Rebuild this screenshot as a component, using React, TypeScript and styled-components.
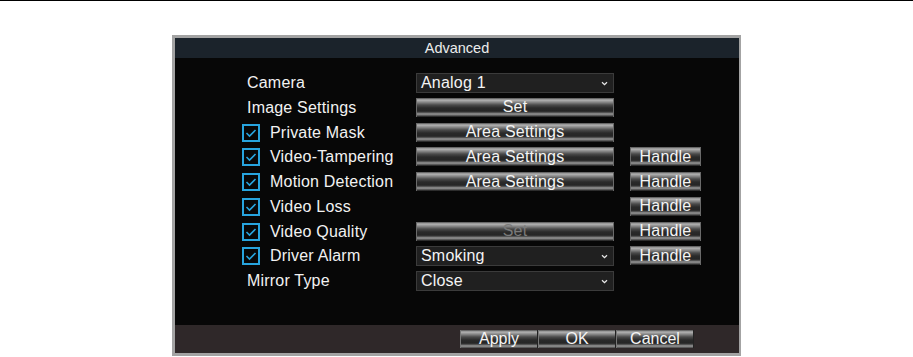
import React from "react";
import styled, { createGlobalStyle, css } from "styled-components";

const GlobalStyle = createGlobalStyle`
  html, body {
    margin: 0;
    padding: 0;
    background: #ffffff;
    font-family: "Liberation Sans", Arial, sans-serif;
  }
`;

const TopRule = styled.div`
  height: 1px;
  background: #000;
`;

const Stage = styled.div`
  padding: 34px 0 0 172px;
`;

const Window = styled.div`
  box-sizing: border-box;
  width: 569px;
  height: 321px;
  display: flex;
  flex-direction: column;
  border: 3px solid #a3a3a3;
  border-right-width: 2px;
`;

const TitleBar = styled.div`
  height: 20px;
  flex-shrink: 0;
  background: #1b232b;
  color: #ececec;
  font-size: 14.5px;
  line-height: 21px;
  text-align: center;
`;

const Body = styled.div`
  flex: 1;
  background: #070707;
  padding: 15px 0 0 67px;
`;

const Form = styled.div`
  display: grid;
  grid-template-columns: 158px 198px 71px;
  grid-auto-rows: 20px;
  column-gap: 16px;
  row-gap: 4.75px;
`;

const Label = styled.div<{ $indent?: boolean }>`
  display: flex;
  align-items: center;
  gap: 10px;
  color: #f2f2f2;
  font-size: 16px;
  letter-spacing: 0.2px;
  padding-left: ${(p) => (p.$indent ? "5px" : "0")};
  white-space: nowrap;
`;

const Box = styled.span`
  box-sizing: border-box;
  width: 18px;
  height: 18px;
  border: 2px solid #27a4de;
  display: flex;
  align-items: center;
  justify-content: center;
`;

const metal = css`
  background: linear-gradient(
    to bottom,
    #4e4e4e 0px,
    #b4b4b4 2px,
    #8c8c8c 4px,
    #4a4a4a 7px,
    #2a2a2a 10px,
    #262626 13px,
    #3a3a3a 14px,
    #9a9a9a 16px,
    #5a5a5a 17.5px,
    #161616 19px
  );
`;

const Button = styled.div<{ $disabled?: boolean }>`
  ${metal}
  height: 19px;
  display: flex;
  align-items: center;
  justify-content: center;
  color: ${(p) => (p.$disabled ? "#7a7a7a" : "#f4f4f4")};
  font-size: 16px;
  letter-spacing: 0.2px;
  box-shadow: inset 1px 0 0 #6a6a6a, inset -1px 0 0 #6a6a6a;
`;

const Select = styled.div`
  box-sizing: border-box;
  height: 20px;
  background: #202020;
  border: 1px solid #3b3b3b;
  display: flex;
  align-items: center;
  justify-content: space-between;
  padding: 0 5px 0 4px;
  color: #f4f4f4;
  font-size: 16px;
  letter-spacing: 0.2px;
`;

const Empty = styled.div``;

const Footer = styled.div`
  height: 28px;
  flex-shrink: 0;
  background: #2f2829;
  display: flex;
  align-items: center;
  justify-content: flex-end;
  padding-right: 45px;
`;

const FooterButton = styled.div`
  ${metal}
  width: 78px;
  height: 18px;
  display: flex;
  align-items: center;
  justify-content: center;
  color: #f4f4f4;
  font-size: 16px;
  box-shadow: inset 1px 0 0 #777, inset -1px 0 0 #222;
`;

function Check() {
  return (
    <Box>
      <svg width="12" height="10" viewBox="0 0 12 10">
        <path d="M1.5 5 L4.5 8 L10.5 2" fill="none" stroke="#27a4de" strokeWidth="1.6" />
      </svg>
    </Box>
  );
}

function Chevron() {
  return (
    <svg width="7" height="5" viewBox="0 0 7 5">
      <path d="M1 1.2 L3.5 3.6 L6 1.2" fill="none" stroke="#e8e8e8" strokeWidth="1.3" />
    </svg>
  );
}

type Row = {
  label: string;
  checked?: boolean;
  control: { kind: "select" | "button" | "none"; text?: string; disabled?: boolean };
  handle?: boolean;
};

const rows: Row[] = [
  { label: "Camera", control: { kind: "select", text: "Analog 1" } },
  { label: "Image Settings", control: { kind: "button", text: "Set" } },
  { label: "Private Mask", checked: true, control: { kind: "button", text: "Area Settings" } },
  { label: "Video-Tampering", checked: true, control: { kind: "button", text: "Area Settings" }, handle: true },
  { label: "Motion Detection", checked: true, control: { kind: "button", text: "Area Settings" }, handle: true },
  { label: "Video Loss", checked: true, control: { kind: "none" }, handle: true },
  { label: "Video Quality", checked: true, control: { kind: "button", text: "Set", disabled: true }, handle: true },
  { label: "Driver Alarm", checked: true, control: { kind: "select", text: "Smoking" }, handle: true },
  { label: "Mirror Type", control: { kind: "select", text: "Close" } },
];

export default function App() {
  return (
    <>
      <GlobalStyle />
      <TopRule />
      <Stage>
        <Window>
          <TitleBar>Advanced</TitleBar>
          <Body>
            <Form>
              {rows.map((r) => (
                <React.Fragment key={r.label}>
                  <Label $indent={!r.checked}>
                    {r.checked && <Check />}
                    {r.label}
                  </Label>
                  {r.control.kind === "select" && (
                    <Select>
                      <span>{r.control.text}</span>
                      <Chevron />
                    </Select>
                  )}
                  {r.control.kind === "button" && (
                    <Button $disabled={r.control.disabled}>{r.control.text}</Button>
                  )}
                  {r.control.kind === "none" && <Empty />}
                  {r.handle ? <Button>Handle</Button> : <Empty />}
                </React.Fragment>
              ))}
            </Form>
          </Body>
          <Footer>
            <FooterButton>Apply</FooterButton>
            <FooterButton>OK</FooterButton>
            <FooterButton>Cancel</FooterButton>
          </Footer>
        </Window>
      </Stage>
    </>
  );
}
